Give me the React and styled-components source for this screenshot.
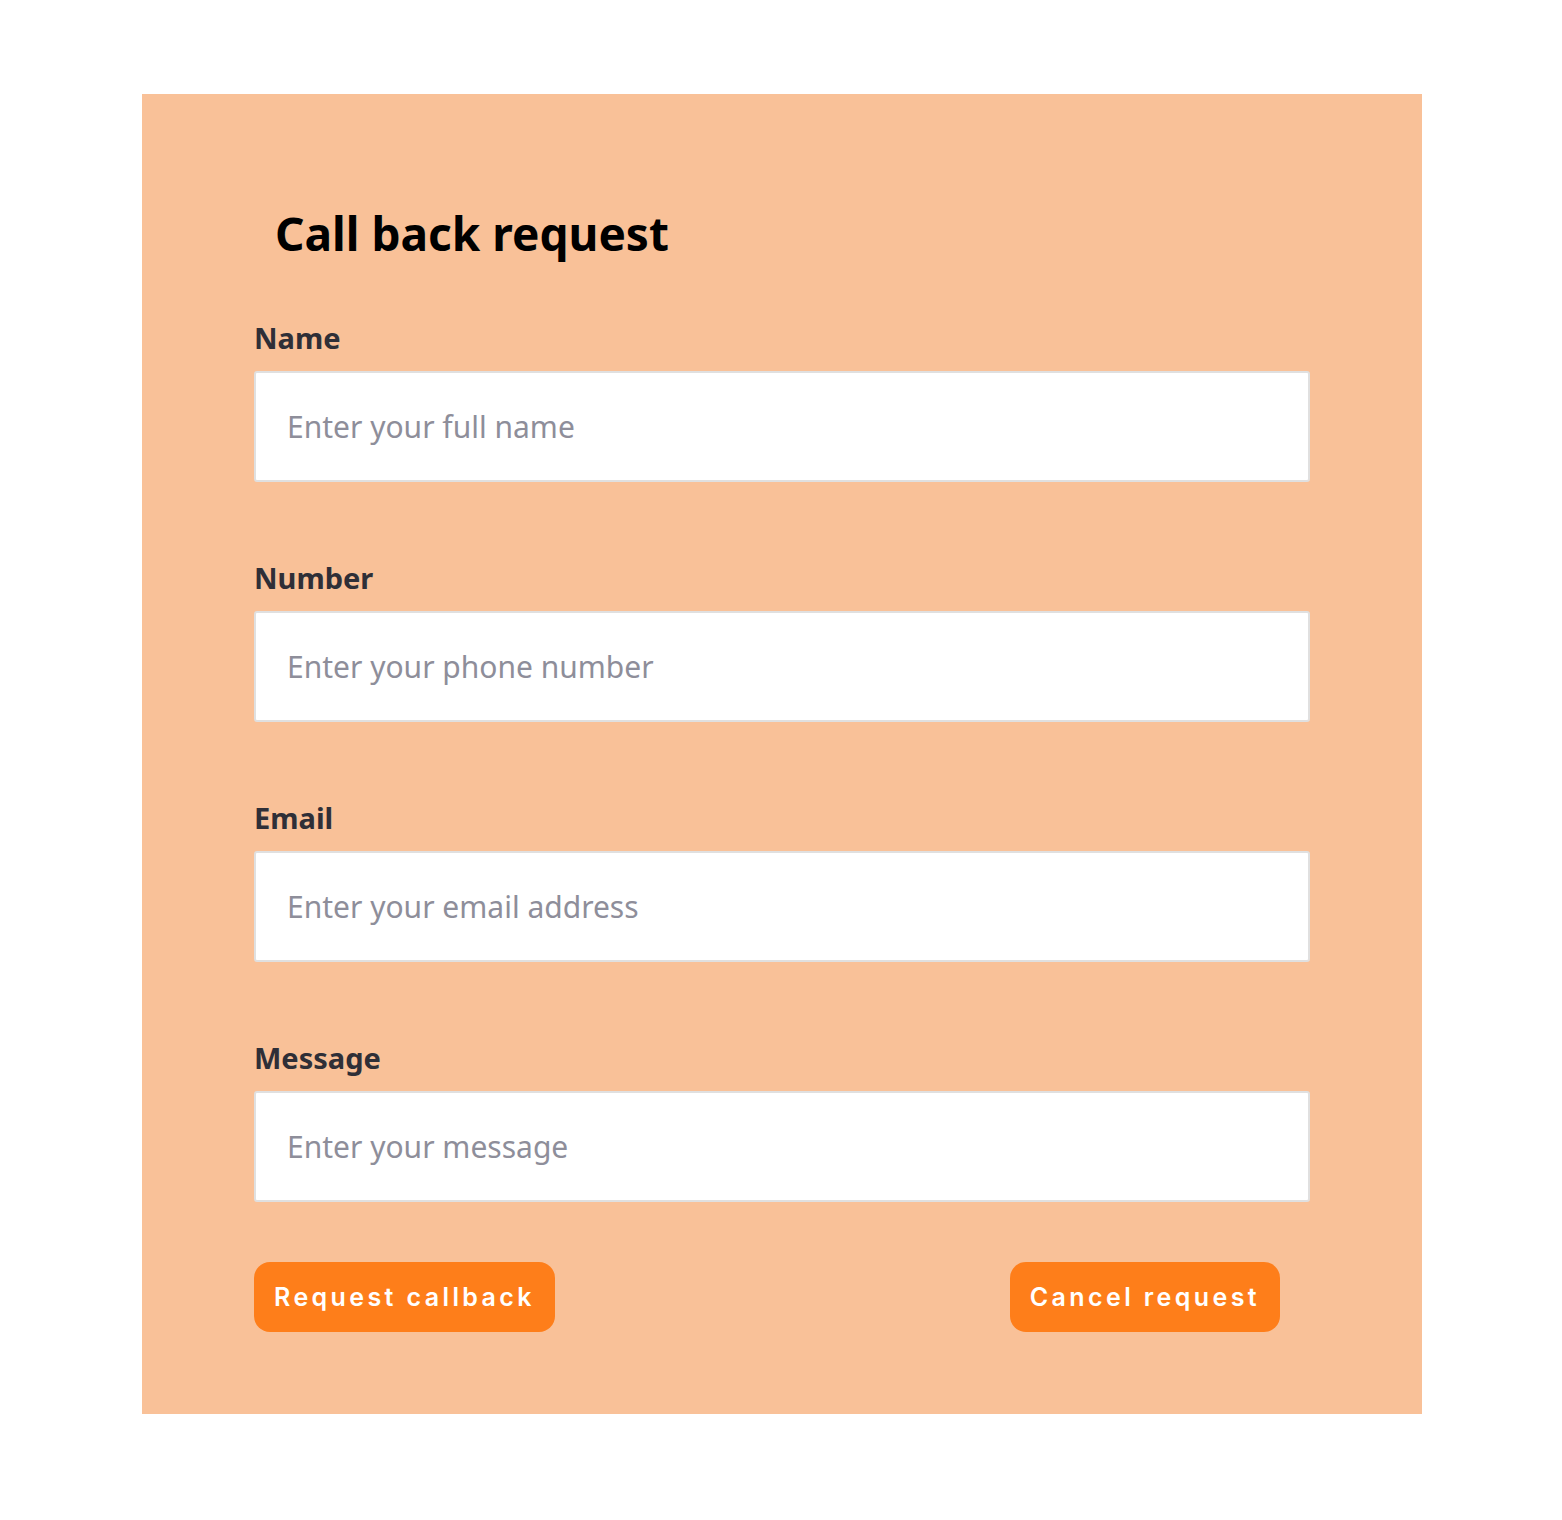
import React from 'react'
import styled, { createGlobalStyle } from 'styled-components'

const GlobalStyle = createGlobalStyle`
  body {
    margin: 0;
    background: #ffffff;
    font-family: "Noto Sans", "Open Sans", sans-serif;
  }
`

const Page = styled.div`
  padding: 94px 0 106px 142px;
`

const Panel = styled.form`
  box-sizing: border-box;
  width: 1280px;
  height: 1320px;
  background: #f9c198;
  padding: 100px 112px 0 112px;
`

const Title = styled.h2`
  margin: 0 0 46px 21px;
  font-size: 46px;
  line-height: 78px;
  font-weight: 700;
  color: #000000;
`

const Field = styled.div`
  display: flex;
  flex-direction: column;
  margin-bottom: 76px;
`

const Label = styled.label`
  font-size: 29px;
  font-weight: 700;
  line-height: 40px;
  color: #2f2f37;
  margin-bottom: 13px;
`

const Input = styled.input`
  box-sizing: border-box;
  width: 1056px;
  height: 111px;
  border: 2px solid #e0e0e0;
  border-radius: 3px;
  background: #ffffff;
  padding: 0 31px;
  font-family: inherit;
  font-size: 30px;
  color: #2f2f37;
  outline: none;

  &::placeholder {
    color: #8e8e9a;
  }
`

const Actions = styled.div`
  display: flex;
  justify-content: space-between;
  padding-right: 30px;
  margin-top: -16px;
`

const Button = styled.button`
  height: 70px;
  padding: 0 20px;
  border: none;
  border-radius: 16px;
  background: #fe7e1a;
  color: #ffffff;
  font-family: Inter, sans-serif;
  font-size: 25px;
  font-weight: 600;
  letter-spacing: 3.4px;
  cursor: pointer;
`

const fields = [
  { id: 'name', label: 'Name', placeholder: 'Enter your full name', type: 'text' },
  { id: 'number', label: 'Number', placeholder: 'Enter your phone number', type: 'tel' },
  { id: 'email', label: 'Email', placeholder: 'Enter your email address', type: 'email' },
  { id: 'message', label: 'Message', placeholder: 'Enter your message', type: 'text' },
]

export default function App() {
  return (
    <Page>
      <GlobalStyle />
      <Panel onSubmit={e => e.preventDefault()}>
        <Title>Call back request</Title>
        {fields.map(f => (
          <Field key={f.id}>
            <Label htmlFor={f.id}>{f.label}</Label>
            <Input id={f.id} type={f.type} placeholder={f.placeholder} />
          </Field>
        ))}
        <Actions>
          <Button type="submit">Request callback</Button>
          <Button type="button">Cancel request</Button>
        </Actions>
      </Panel>
    </Page>
  )
}
